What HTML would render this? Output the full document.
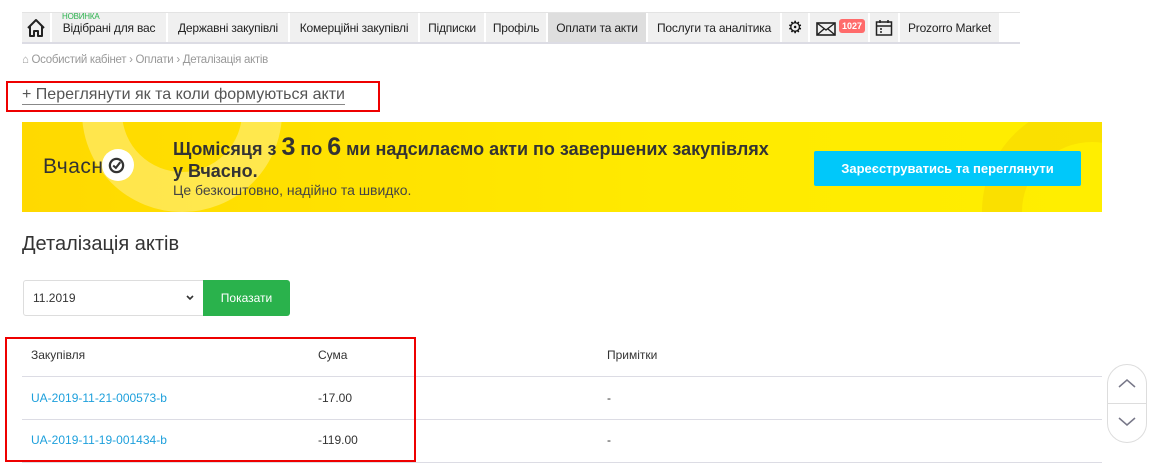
<!DOCTYPE html>
<html><head><meta charset="utf-8"><style>
*{box-sizing:border-box;margin:0;padding:0}
body{width:1152px;height:464px;overflow:hidden;background:#fff;font-family:"Liberation Sans",Arial,sans-serif;color:#333;position:relative}
.a{position:absolute}
.nav{left:22px;top:12px;height:32px;width:998px;border-top:1px solid #e3e3e3;border-bottom:2px solid #dcdce4;background:#fff}
.c{position:absolute;top:0;height:29px;background:#f0f0f0;border-right:2px solid #fff;font-size:12px;letter-spacing:-0.2px;color:#222;line-height:30px;text-align:center;white-space:nowrap}
.bc{left:22px;top:54px;font-size:11.5px;color:#999;letter-spacing:-0.3px}
</style></head><body>
<div class="a nav">
 <div class="c" style="left:0;width:30px"><svg width="22" height="22" viewBox="0 0 22 22" style="margin-top:4px"><path d="M3 11 L11 3 L19 11 M5 9 V19 H9 V14 H13 V19 H17 V9" fill="none" stroke="#222" stroke-width="2" stroke-linejoin="round"/></svg></div>
 <div class="c" style="left:30px;width:116px"><span style="position:absolute;left:10px;top:-11px;font-size:8px;color:#2ab24c">НОВИНКА</span>Відібрані для вас</div>
 <div class="c" style="left:146px;width:122px">Державні закупівлі</div>
 <div class="c" style="left:268px;width:130px">Комерційні закупівлі</div>
 <div class="c" style="left:398px;width:66px">Підписки</div>
 <div class="c" style="left:464px;width:62px">Профіль</div>
 <div class="c" style="left:526px;width:100px;background:#dedede">Оплати та акти</div>
 <div class="c" style="left:626px;width:134px">Послуги та аналітика</div>
 <div class="c" style="left:760px;width:28px;font-size:17px;color:#111">⚙</div>
 <div class="c" style="left:788px;width:60px"><svg width="20" height="14" viewBox="0 0 20 14" style="position:absolute;left:6px;top:9px"><rect x="1" y="1" width="18" height="12" fill="none" stroke="#222" stroke-width="1.6"/><path d="M1 1 L10 8 L19 1 M1 13 L8 7 M19 13 L12 7" fill="none" stroke="#222" stroke-width="1.4"/></svg><span style="position:absolute;left:29px;top:6px;background:#ff6b6b;color:#fff;font-size:9px;font-weight:bold;line-height:14px;padding:0 3px;border-radius:3px;letter-spacing:0">1027</span></div>
 <div class="c" style="left:848px;width:30px"><svg width="18" height="18" viewBox="0 0 18 18" style="margin-top:6px"><rect x="1.5" y="3" width="15" height="13" fill="none" stroke="#222" stroke-width="1.5"/><path d="M1.5 7 H16.5 M5 1 V4 M13 1 V4 M5 10 H7 M5 13 H7" stroke="#222" stroke-width="1.5"/></svg></div>
 <div class="c" style="left:878px;width:101px">Prozorro Market</div>
</div>
<div class="a bc">⌂ Особистий кабінет › Оплати › Деталізація актів</div>
<div class="a" style="left:6px;top:81px;width:374px;height:31px;border:2px solid #e00"></div>
<div class="a" style="left:22px;top:85px;font-size:16px;color:#555;border-bottom:1px solid #888;line-height:19px">+ Переглянути як та коли формуються акти</div>
<div class="a" style="left:22px;top:122px;width:1080px;height:90px;background:linear-gradient(90deg,#ffd900,#ffea00 60%,#ffee00);overflow:hidden">
 <div class="a" style="left:60px;top:-110px;width:200px;height:200px;border-radius:50%;border:40px solid rgba(255,255,255,.3)"></div>
 <div class="a" style="left:960px;top:-20px;width:220px;height:220px;border-radius:50%;border:40px solid rgba(240,200,0,.35)"></div>
 <div class="a" style="left:80px;top:27px;width:32px;height:32px;border-radius:50%;background:#fff"></div>
 <div class="a" style="left:21px;top:33px;font-size:21px;color:#333;letter-spacing:0.5px">Вчасн</div>
 <svg class="a" style="left:86px;top:35px" width="17" height="17" viewBox="0 0 18 18"><circle cx="9" cy="9" r="7" fill="none" stroke="#333" stroke-width="2.4"/><path d="M5.5 9 L8.3 11.5 L13 5.5" fill="none" stroke="#333" stroke-width="2.2"/></svg>
 <div class="a" style="left:151px;top:14px;font-size:18px;font-weight:bold;color:#333;line-height:22px">Щомісяця з <span style="font-size:25px">3</span> по <span style="font-size:25px">6</span> ми надсилаємо акти по завершених закупівлях<br>у Вчасно.</div>
 <div class="a" style="left:151px;top:60px;font-size:14px;color:#444">Це безкоштовно, надійно та швидко.</div>
 <div class="a" style="left:792px;top:29px;width:267px;height:35px;background:#00c8fa;border-radius:2px;color:#fff;font-size:13px;font-weight:bold;text-align:center;line-height:35px">Зареєструватись та переглянути</div>
</div>
<div class="a" style="left:22px;top:233px;font-size:20px;color:#333">Деталізація актів</div>
<div class="a" style="left:23px;top:280px;width:181px;height:36px;border:1px solid #ddd;border-radius:3px 0 0 3px;font-size:12px;line-height:34px;padding-left:9px">11.2019<svg style="position:absolute;right:9px;top:14px" width="8" height="6"><path d="M1 1 L4 4 L7 1" fill="none" stroke="#333" stroke-width="1.6"/></svg></div>
<div class="a" style="left:203px;top:280px;width:87px;height:36px;background:#2ab24c;border-radius:0 3px 3px 0;color:#fff;font-size:12px;text-align:center;line-height:36px">Показати</div>
<div class="a" style="left:22px;top:376px;width:1080px;height:1px;background:#dcdce4"></div>
<div class="a" style="left:22px;top:419px;width:1080px;height:1px;background:#dcdce4"></div>
<div class="a" style="left:22px;top:462px;width:1080px;height:1px;background:#dcdce4"></div>
<div class="a" style="left:31px;top:348px;font-size:12px">Закупівля</div>
<div class="a" style="left:318px;top:348px;font-size:12px">Сума</div>
<div class="a" style="left:607px;top:348px;font-size:12px">Примітки</div>
<div class="a" style="left:31px;top:391px;font-size:12px;color:#1ea0dc">UA-2019-11-21-000573-b</div>
<div class="a" style="left:318px;top:391px;font-size:12px">-17.00</div>
<div class="a" style="left:607px;top:391px;font-size:12px">-</div>
<div class="a" style="left:31px;top:433px;font-size:12px;color:#1ea0dc">UA-2019-11-19-001434-b</div>
<div class="a" style="left:318px;top:433px;font-size:12px">-119.00</div>
<div class="a" style="left:607px;top:433px;font-size:12px">-</div>
<div class="a" style="left:5px;top:337px;width:411px;height:125px;border:2px solid #e00"></div>
<div class="a" style="left:1107px;top:364px;width:40px;height:79px;border:1px solid #ddd;border-radius:20px;background:#fff">
 <div class="a" style="left:0;top:38px;width:38px;height:1px;background:#ddd"></div>
 <svg class="a" style="left:9px;top:12px" width="20" height="12"><path d="M2 10 L10 3 L18 10" fill="none" stroke="#778" stroke-width="1.5"/></svg>
 <svg class="a" style="left:9px;top:51px" width="20" height="12"><path d="M2 2 L10 9 L18 2" fill="none" stroke="#778" stroke-width="1.5"/></svg>
</div>
</body></html>
